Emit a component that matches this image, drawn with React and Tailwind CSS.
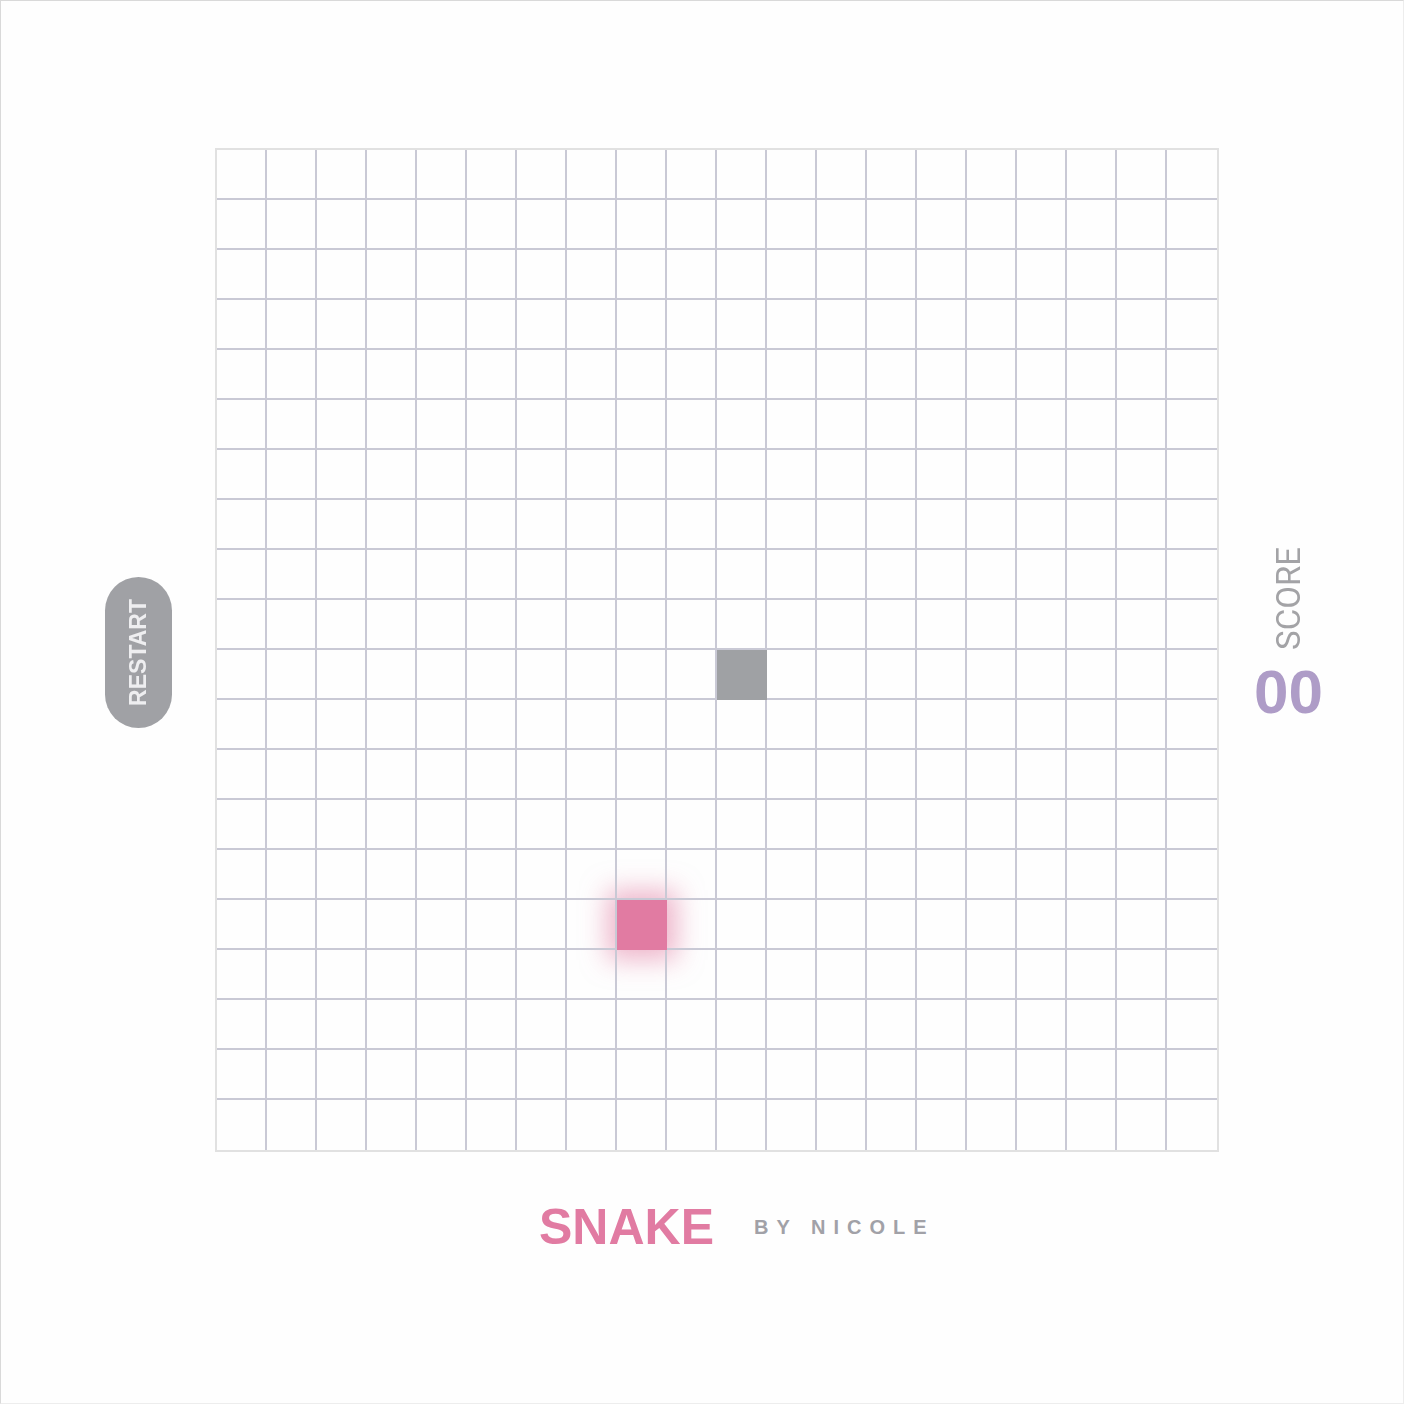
import React from "react";

const COLS = 20;
const ROWS = 20;

export default function App() {
  const cells = [];
  for (let r = 0; r < ROWS; r++) {
    for (let c = 0; c < COLS; c++) {
      cells.push(
        <div
          key={`${r}-${c}`}
          className={`h-[50px] border-[#c9c9d5] ${c === COLS - 1 ? "border-r-0" : "border-r-2"} ${
            r === ROWS - 1 ? "border-b-0" : "border-b-2"
          }`}
        />
      );
    }
  }

  return (
    <div className="w-[1404px] h-[1404px] bg-[#fefefe] border border-[#d9d9d9] border-r-[#ededed] border-b-[#ededed] flex flex-col pt-[147px] font-['Liberation_Sans',Arial,sans-serif]">
      <div className="flex items-start">
        <button className="ml-[104px] mt-[429px] w-[67px] h-[151px] rounded-full bg-[#a0a1a5] flex items-center justify-center">
          <span className="[writing-mode:vertical-rl] rotate-180 text-[23px] leading-none font-bold text-[#eeeef0]">
            RESTART
          </span>
        </button>

        <div className="ml-[43px] w-[1004px] h-[1004px] border-2 border-[#e1e1e1] relative">
          <div className="absolute left-[400px] top-[750px] w-[50px] h-[50px] bg-[#e17ba2] shadow-[0_0_26px_10px_rgba(225,123,162,0.55)]" />
          <div className="grid grid-cols-20 blur-[0.7px]">{cells}</div>
          <div className="absolute left-[500px] top-[500px] w-[50px] h-[50px] bg-[#9fa1a4]" />
          <div className="absolute left-[400px] top-[750px] w-[50px] h-[50px] bg-[#e17ba2]" />
        </div>

        <div className="ml-[35px] mt-[399px] flex flex-col items-center">
          <span className="[writing-mode:vertical-rl] rotate-180 font-['Roboto',sans-serif] text-[33px] leading-none text-[#a3a3a6]">
            SCORE
          </span>
          <span className="mt-[11px] text-[62px] leading-none font-bold text-[#ae9cc7]">00</span>
        </div>
      </div>

      <div className="flex items-center pl-[538px] mt-[50px]">
        <span className="text-[50px] leading-none font-bold text-[#e17ba2]">SNAKE</span>
        <span className="ml-[40px] text-[20px] leading-none font-bold tracking-[8px] text-[#a1a1a7]">
          BY NICOLE
        </span>
      </div>
    </div>
  );
}
